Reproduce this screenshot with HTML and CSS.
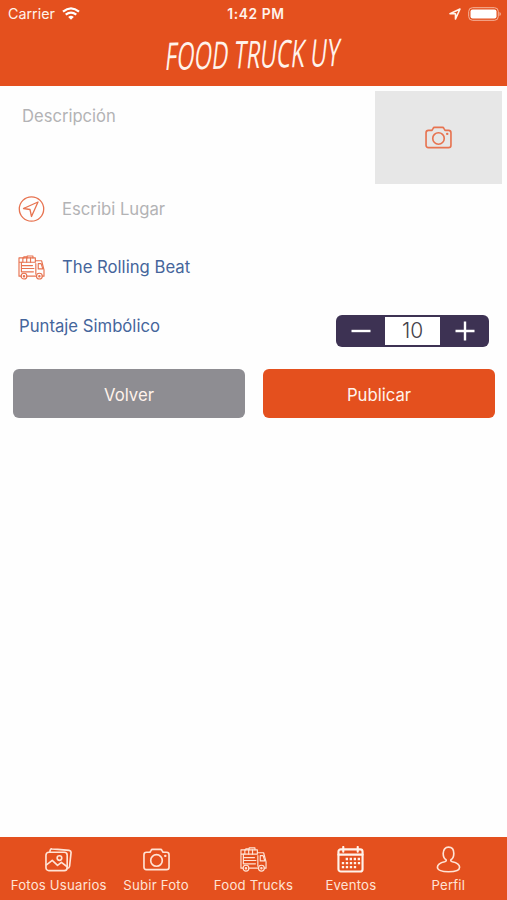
FILE: index.html
```html
<!DOCTYPE html>
<html lang="es">
<head>
    <meta charset="UTF-8">
    <meta name="viewport" content="width=device-width, initial-scale=1.0">
    <title>Food Truck UY</title>
    <link rel="stylesheet" href="styles.css">
</head>
<body>
    <svg class="sprite" width="0" height="0">
        <symbol id="camera" viewBox="0 0 28 24">
            <path d="M3.500 4.500h3.700l1.200-2Q8.800 1.500 9.800 1.500h8.400q1 0 1.400 1l1.200 2h3.700Q27 4.500 27 7v13q0 2.500-2.500 2.500h-21Q1 22.500 1 20V7Q1 4.500 3.500 4.500z"/>
            <circle cx="14" cy="13" r="6"/>
            <path d="M23 8.300h.2" stroke-width="2.400"/>
        </symbol>
        <symbol id="truck" viewBox="0 0 28 26">
            <path d="M3.200 22H1V3h17v4.500M9.200 22h10M25.200 22H27v-6.500L24.500 6H18M1 7.500h17"/>
            <path d="M6 3V2h3.500M9.500 3V1h6v2M5 3v4.500M9 3v4.500M13 3v4.500"/>
            <path d="M3.500 11H15M3.500 14H16.500M3.500 7.500V17.500H16M18.500 9v11M21 9h3l1.800 5.500H21z"/>
            <circle cx="6.200" cy="22" r="3"/>
            <circle cx="6.200" cy="22" r=".7"/>
            <circle cx="22.200" cy="22" r="3"/>
            <circle cx="22.200" cy="22" r=".7"/>
        </symbol>
    </svg>

    <header class="header">
        <div class="status">
            <div class="carrier">
                <span>Carrier</span>
                <svg class="wifi" viewBox="0 0 18 13">
                    <path d="M1 4.700Q9-2 17 4.700M3.700 7.700Q9 3.500 14.300 7.700"/>
                    <path class="dot" d="M6.200 10Q9 7.700 11.800 10L9 12.800z"/>
                </svg>
            </div>
            <div class="time">1:42 PM</div>
            <div class="battery-side">
                <svg class="location" viewBox="0 0 12 12"><path d="M1 5.800L11 1 6.500 11V5.800z"/></svg>
                <svg class="battery" viewBox="0 0 34 14">
                    <rect class="case" x=".7" y=".7" width="29.600" height="12.600" rx="3.800"/>
                    <rect x="2.500" y="2.500" width="26" height="9" rx="2"/>
                    <path d="M31.500 5v4q1.300-.6 1.300-2t-1.300-2z" opacity=".6"/>
                </svg>
            </div>
        </div>
        <h1 class="logo"><span>FOOD TRUCK UY</span></h1>
    </header>

    <main class="form">
        <div class="description">
            <span class="placeholder">Descripción</span>
            <div class="photo"><svg class="icon" viewBox="0 0 28 24"><use href="#camera"/></svg></div>
        </div>
        <div class="row">
            <svg class="icon round" viewBox="0 0 26 26">
                <circle cx="13" cy="13" r="12.200"/>
                <path d="M5 12.500L19.500 6 13 20.500l-1.500-7z"/>
            </svg>
            <span class="placeholder">Escribi Lugar</span>
        </div>
        <div class="row">
            <svg class="icon thin" viewBox="0 0 28 26"><use href="#truck"/></svg>
            <span>The Rolling Beat</span>
        </div>
        <div class="score">
            <span class="score-label">Puntaje Simbólico</span>
            <div class="stepper">
                <svg class="sign" viewBox="0 0 20 20"><path d="M.5 10h19"/></svg>
                <span class="number">10</span>
                <svg class="sign" viewBox="0 0 20 20"><path d="M.5 10h19M10 .5v19"/></svg>
            </div>
        </div>
        <div class="buttons">
            <button class="button back">Volver</button>
            <button class="button publish">Publicar</button>
        </div>
    </main>

    <nav class="tabs">
        <a class="tab">
            <svg class="icon" viewBox="0 0 28 26">
                <rect x="1" y="5.500" width="22" height="19" rx="3"/>
                <path d="M5 5.500l.3-2Q5.600 1.800 7.300 2L25 3.500q2.300.3 2 2.700L25.500 20q-.3 2-2.500 2.200M1.500 18.500l6-4.500 5.500 5 4-3 6 4.500"/>
                <circle cx="15" cy="11.500" r="2.400"/>
            </svg>
            <span>Fotos Usuarios</span>
        </a>
        <a class="tab">
            <svg class="icon" viewBox="0 0 28 24"><use href="#camera"/></svg>
            <span>Subir Foto</span>
        </a>
        <a class="tab">
            <svg class="icon thin" viewBox="0 0 28 26"><use href="#truck"/></svg>
            <span>Food Trucks</span>
        </a>
        <a class="tab">
            <svg class="icon calendar" viewBox="0 0 28 28">
                <rect x="1.500" y="3.500" width="25" height="23" rx="2.500"/>
                <path d="M1.500 9h25M6.500 1v5M21.500 1v5"/>
                <path class="days" d="M9 13.500h15M5 17.700h19M5 21.900h15"/>
            </svg>
            <span>Eventos</span>
        </a>
        <a class="tab">
            <svg class="icon" viewBox="0 0 26 28">
                <path d="M10.500 14.200C8.500 13 7.500 10.500 7.500 7.700 7.500 3.700 9.700 1.200 13 1.200s5.500 2.500 5.500 6.500c0 2.800-1 5.300-3 6.500-.5 1.200.2 1.700 1.500 2.100 4.500 1 7.500 2.700 7.500 5.700 0 3-4.800 4.700-11.500 4.700S1.500 25 1.500 22c0-3 3-4.700 7.500-5.700 1.300-.4 2-.9 1.500-2.100z"/>
            </svg>
            <span>Perfil</span>
        </a>
    </nav>
</body>
</html>
```

FILE: styles.css
```css
* {
    box-sizing: border-box;
}
body {
    margin: 0;
    height: 900px;
    display: flex;
    flex-direction: column;
    background-color: #fefefe;
    font-family: Inter, "Liberation Sans", sans-serif;
    color: #45659b;
}
.sprite {
    position: absolute;
}
.header {
    height: 86px;
    background-color: #e4501e;
    color: #fff3eb;
}
.status {
    height: 27px;
    padding: 0 7px 0 8px;
    display: grid;
    grid-template-columns: 1fr auto 1fr;
    align-items: center;
    font-size: 14.3px;
}
.carrier, .battery-side {
    display: flex;
    align-items: center;
    gap: 7px;
}
.battery-side {
    justify-content: flex-end;
}
.time {
    font-weight: 600;
    font-size: 13.8px;
    letter-spacing: 0.6px;
    margin-left: 4px;
}
.wifi {
    width: 18px;
    height: 13px;
    fill: none;
    stroke: #fff;
    stroke-width: 2.2;
}
.wifi .dot {
    fill: #fff;
    stroke: none;
}
.location {
    width: 12px;
    height: 12px;
    fill: none;
    stroke: #fff3eb;
    stroke-width: 1.6;
    stroke-linejoin: round;
}
.battery {
    width: 34px;
    height: 14px;
    margin-right: -2px;
    fill: #fff;
}
.battery .case {
    fill: none;
    stroke: #f5b59d;
    stroke-width: 1;
}
.logo {
    margin: 0;
    height: 52px;
    display: flex;
    justify-content: center;
    align-items: center;
    font-family: "Open Sans", sans-serif;
    font-size: 38px;
    font-weight: 500;
    white-space: nowrap;
}
.logo span {
    transform: rotate(-1.3deg) scaleX(0.592) skewX(-13deg);
}
.form {
    flex: 1;
}
.description {
    display: flex;
    justify-content: space-between;
    padding: 5px 5px 0 22px;
    height: 94px;
    font-size: 16.6px;
}
.description .placeholder {
    padding-top: 15px;
}
.placeholder {
    color: #b3b3b5;
}
.photo {
    width: 127px;
    height: 93px;
    display: flex;
    justify-content: center;
    align-items: center;
    background-color: #e7e7e7;
}
.icon {
    width: 27px;
    height: 25px;
    fill: none;
    stroke: currentColor;
    stroke-width: 1.7;
    stroke-linejoin: round;
    stroke-linecap: round;
}
.thin {
    stroke-width: 1.2;
}
.photo .icon {
    height: 23px;
    margin-bottom: 1px;
}
.photo .icon, .row .icon {
    color: #e77350;
}
.row {
    height: 58px;
    padding: 0 18px;
    display: flex;
    align-items: center;
    gap: 17px;
    font-size: 16.7px;
}
.row .round {
    width: 27px;
    height: 26px;
    stroke-width: 1.3;
}
.score {
    height: 70px;
    padding: 0 18px 0 19px;
    display: flex;
    justify-content: space-between;
    align-items: center;
    font-size: 16.7px;
}
.score-label {
    padding-bottom: 11px;
}
.stepper {
    width: 153px;
    height: 32px;
    padding: 2px 0;
    display: grid;
    grid-template-columns: 49px 55px 49px;
    justify-items: center;
    align-items: center;
    background-color: #3d3253;
    border-radius: 6px;
}
.sign {
    width: 20px;
    height: 20px;
    fill: none;
    stroke: #fff;
    stroke-width: 2.4;
}
.number {
    width: 55px;
    height: 28px;
    line-height: 28px;
    text-align: center;
    background-color: #fff;
    color: #45424b;
    font-size: 21px;
    font-weight: 300;
}
.buttons {
    display: flex;
    gap: 18px;
    margin-top: 3px;
    padding: 0 12px 0 13px;
}
.button {
    flex: 1;
    height: 49px;
    padding: 2px 0 0;
    border: none;
    border-radius: 6px;
    color: #fff3eb;
    font-family: inherit;
    font-size: 16.7px;
}
.back {
    background-color: #8e8d92;
}
.publish {
    background-color: #e4501e;
}
.tabs {
    height: 63px;
    padding: 9px 10px 0;
    display: grid;
    grid-template-columns: repeat(5, 1fr);
    background-color: #e4501e;
    color: #ffe3d5;
    font-size: 13.2px;
    letter-spacing: 0.2px;
}
.tab {
    display: flex;
    flex-direction: column;
    align-items: center;
    gap: 4px;
    white-space: nowrap;
}
.tab .icon {
    height: 27px;
}
.tab .calendar {
    color: #fff3eb;
    stroke-width: 2.2;
}
.calendar .days {
    stroke-width: 2.4;
    stroke-dasharray: 2.4 1.75;
    stroke-linecap: butt;
}
```
